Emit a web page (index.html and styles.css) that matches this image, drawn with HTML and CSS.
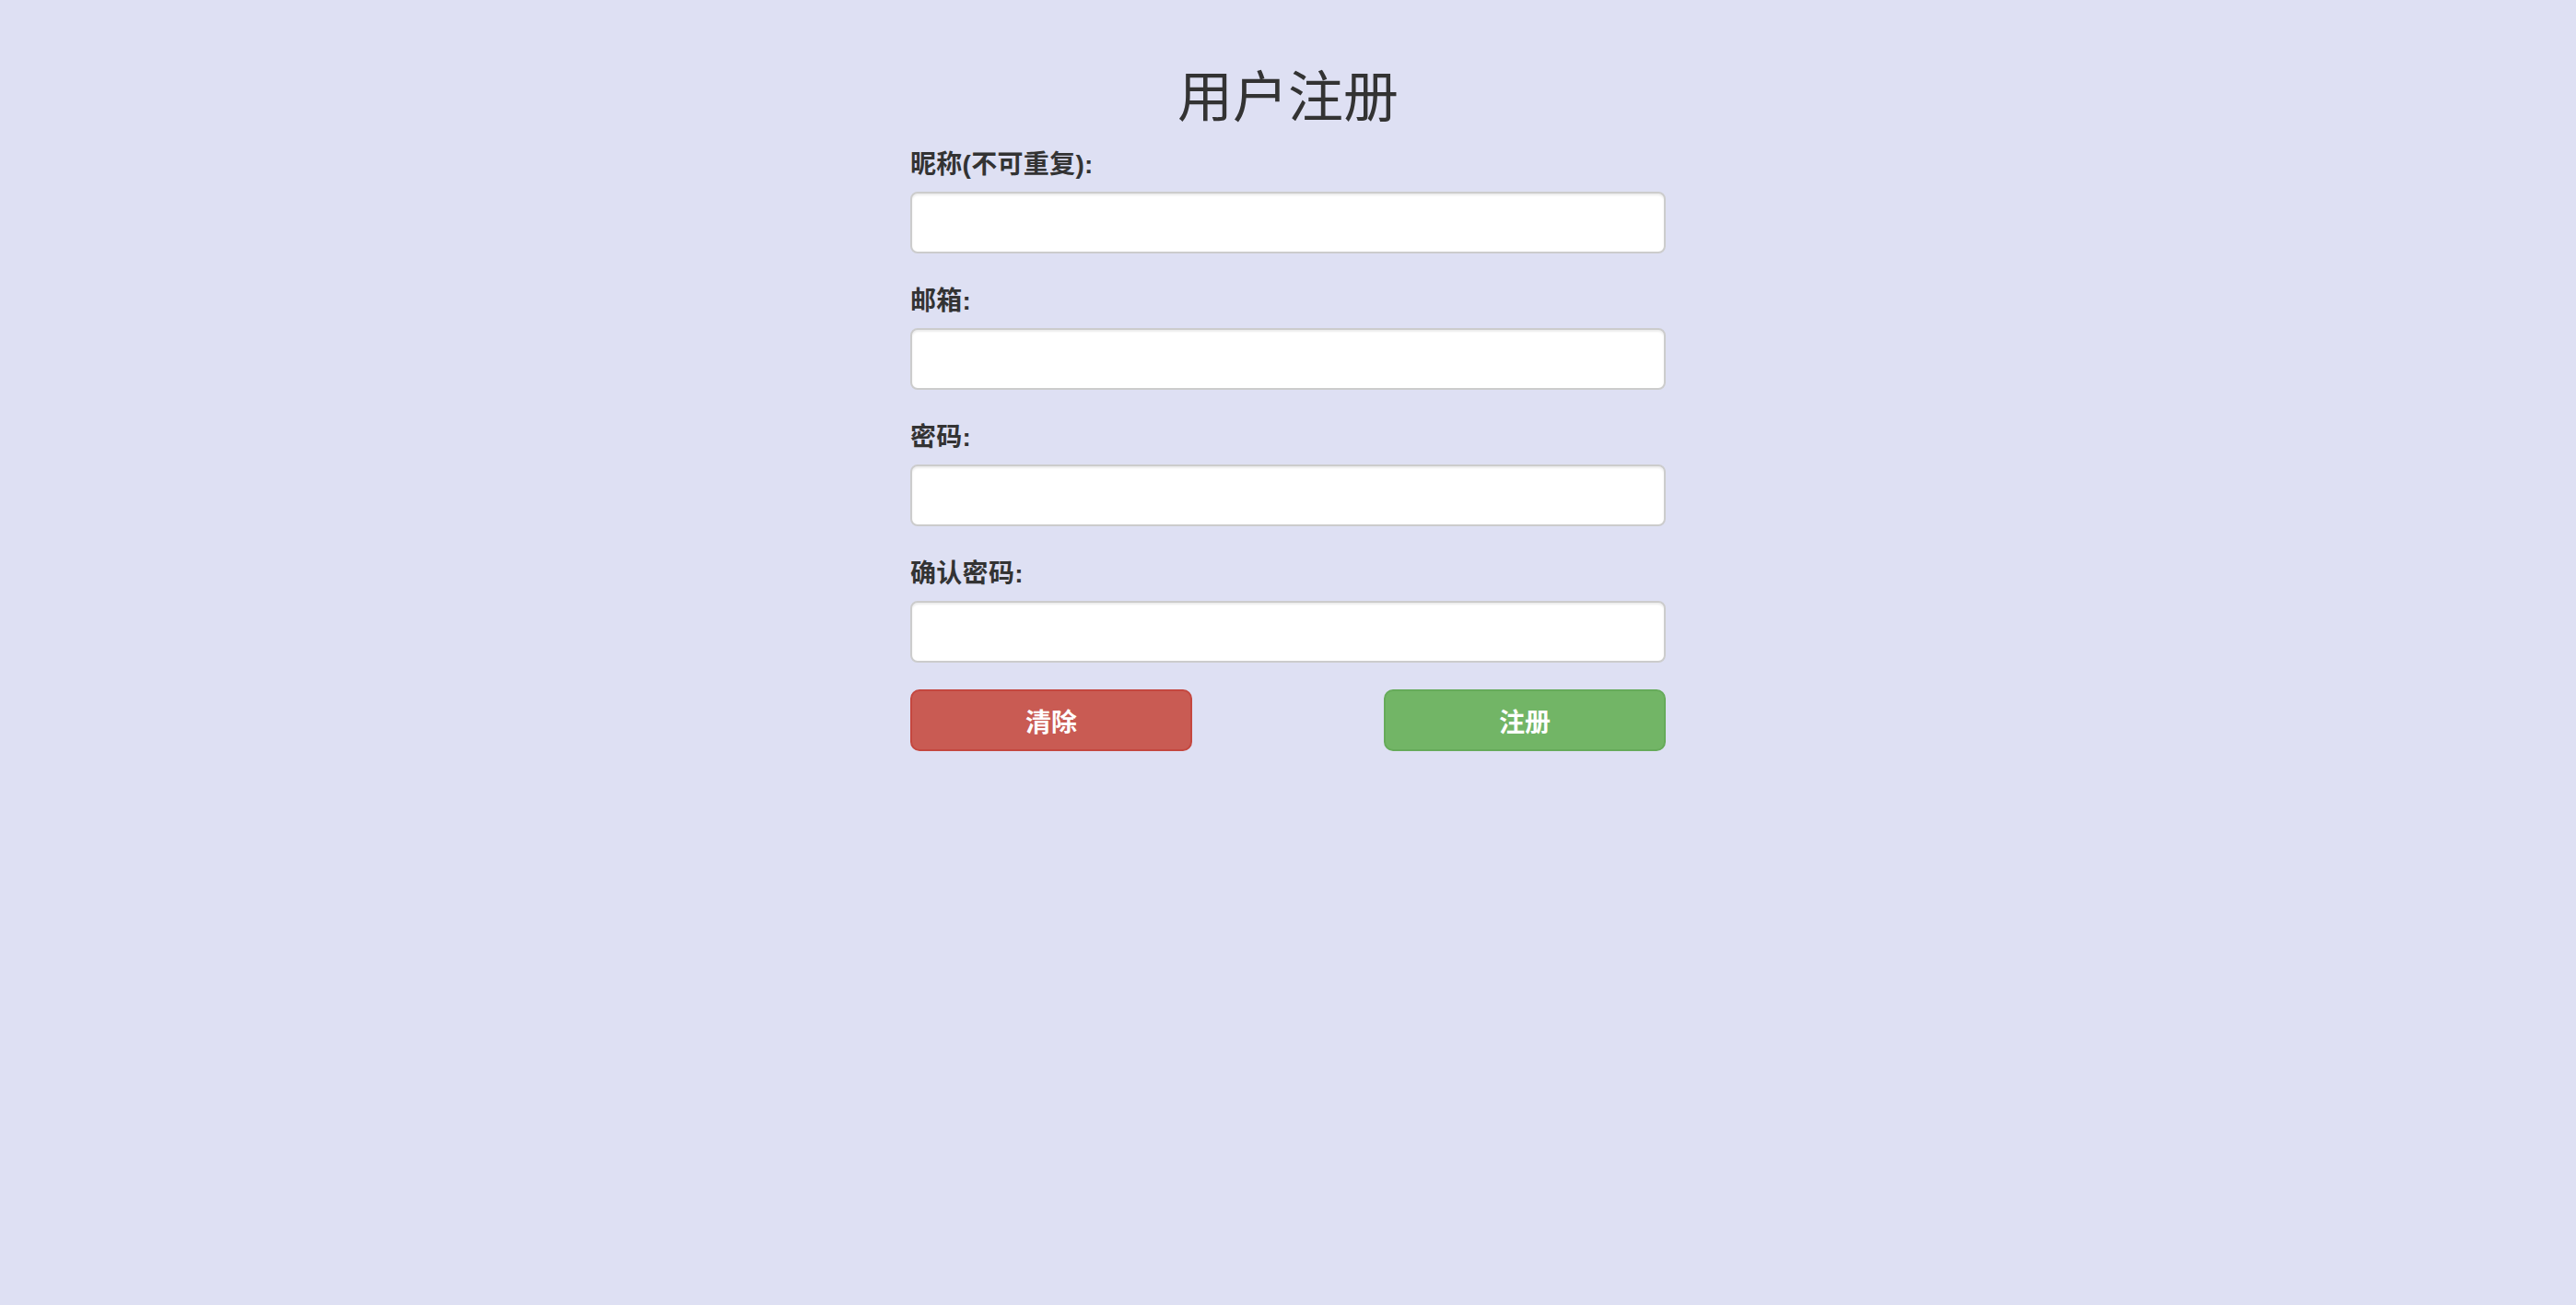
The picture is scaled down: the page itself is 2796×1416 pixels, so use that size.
FILE: index.html
```html
<!DOCTYPE html>
<html lang="zh-CN">
<head>
  <meta charset="UTF-8">
  <meta name="viewport" content="width=device-width, initial-scale=1.0">
  <title>用户注册</title>
  <link rel="stylesheet" href="styles.css">
</head>
<body>
  <div class="container">
    <h1 class="title">用户注册</h1>
    <form id="registerForm" onsubmit="return false">
      <div class="form-group">
        <label for="nickname">昵称(不可重复):</label>
        <input type="text" id="nickname" class="form-control">
      </div>
      <div class="form-group">
        <label for="email">邮箱:</label>
        <input type="email" id="email" class="form-control">
      </div>
      <div class="form-group">
        <label for="password">密码:</label>
        <input type="password" id="password" class="form-control">
      </div>
      <div class="form-group">
        <label for="confirm">确认密码:</label>
        <input type="password" id="confirm" class="form-control">
      </div>
      <div class="btn-row">
        <button type="reset" class="btn btn-danger">清除</button>
        <button type="submit" class="btn btn-success">注册</button>
      </div>
    </form>
  </div>
</body>
</html>
```

FILE: styles.css
```css
* {
  box-sizing: border-box;
}

body {
  margin: 0;
  background: #dee0f3;
  color: #333;
  font-family: "Liberation Sans", "Noto Sans CJK SC", sans-serif;
}

.container {
  width: 820px;
  margin: 0 auto;
}

.title {
  margin: 73px 0 15px;
  font-family: serif;
  font-size: 60px;
  font-weight: normal;
  line-height: 68px;
  text-align: center;
}

.form-group {
  margin-bottom: 29px;
}

label {
  display: block;
  padding-top: 3px;
  font-size: 28px;
  font-weight: bold;
  line-height: 40px;
  letter-spacing: 0.3px;
  margin-bottom: 9px;
}

.form-control {
  display: block;
  width: 100%;
  height: 67px;
  padding: 10px 20px;
  font-size: 28px;
  background: #fff;
  border: 2px solid #ccc;
  border-radius: 8px;
  box-shadow: inset 0 2px 2px rgba(0,0,0,0.075);
}

.btn-row {
  display: flex;
  justify-content: space-between;
  margin-top: 5px;
}

.btn {
  width: 306px;
  height: 67px;
  border: 2px solid;
  border-radius: 10px;
  color: #fff;
  font-family: inherit;
  font-size: 28px;
  font-weight: bold;
  cursor: pointer;
}

.btn-danger {
  background: #c95b53;
  border-color: #c4473f;
}

.btn-success {
  background: #72b566;
  border-color: #66ab5a;
}
```
